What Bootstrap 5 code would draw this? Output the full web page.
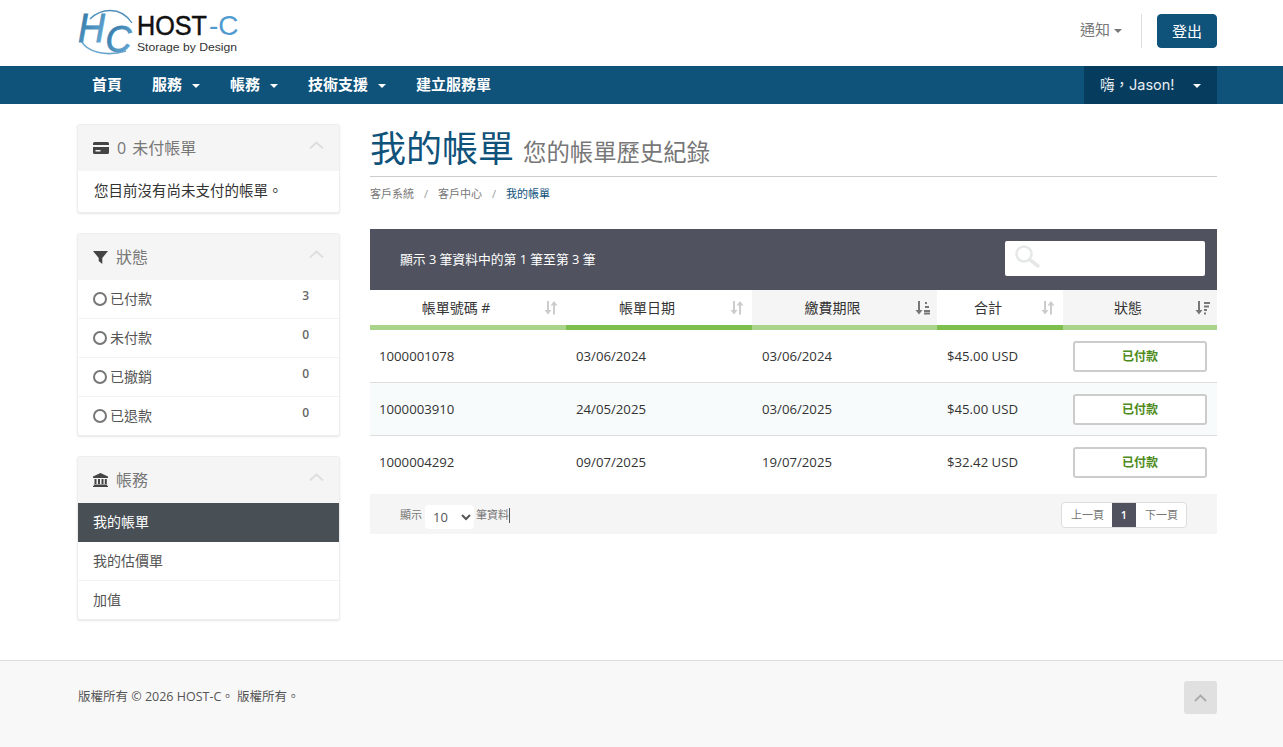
<!DOCTYPE html>
<html lang="zh-Hant">
<head>
  <meta charset="UTF-8">
  <meta name="viewport" content="width=device-width, initial-scale=1.0">
  <title>我的帳單 - HOST-C</title>
  <link href="https://cdn.jsdelivr.net/npm/bootstrap@5.3.0/dist/css/bootstrap.min.css" rel="stylesheet">
  <style>
    body { font-family: "Open Sans", "Noto Sans CJK TC", sans-serif; font-size: 14px; color: #333; background: #fff; overflow: hidden; }
    .wrap { width: 1139px; margin-left: 78px; }

    .top-head { height: 66px; }
    .logo-svg { display: block; width: 164px; height: 56px; }
    .head-right { margin-bottom: 4px; }
    .notify { color: #777; font-size: 15px; margin-bottom: 3px; }
    .caret-down { display: inline-block; width: 0; height: 0; border-left: 4px solid transparent; border-right: 4px solid transparent; border-top: 4px solid currentColor; vertical-align: middle; }
    .head-split { width: 1px; height: 34px; background: #ddd; margin: 0 15px 0 19px; }
    .logout-btn { background: #0f527a; color: #fff; border: 1px solid #0f527a; border-radius: 4px; font-size: 15px; padding: 0; width: 60px; height: 34px; }

    .main-nav { background: #0f527a; height: 38px; }
    .main-nav .wrap { height: 38px; }
    .main-link { color: #fff; font-weight: 700; font-size: 15px; padding: 0 15px; line-height: 36px; text-decoration: none; white-space: nowrap; }
    .main-link:first-child { margin-left: -1px; }
    .main-link .caret-down { margin-left: 10px; }
    .user-link { background: #063d5f; color: #e6eef3; font-family: Inter, "Noto Sans CJK TC", sans-serif; font-size: 14.5px; height: 38px; line-height: 38px; width: 133px; padding-left: 16px; text-decoration: none; white-space: nowrap; }
    .user-link .caret-down { margin-left: 18px; color: #fff; }

    .page-body { padding-top: 20px; height: 556px; gap: 30px; }
    .side-col { width: 263px; flex: none; margin-left: -1px; }
    .main-col { width: 847px; flex: none; }

    .side-panel { border: 1px solid #eee; border-radius: 3px; margin-bottom: 20px; box-shadow: 0 1px 2px rgba(0,0,0,.1); background: #fff; }
    .side-head { background: #f5f5f5; height: 46px; padding: 0 15px; color: #777; font-size: 16px; gap: 8px; word-spacing: 2px; }
    .side-head svg.ico { color: #444; flex: none; }
    .side-head .chev { margin-left: auto; margin-top: -6px; }
    .side-text { padding: 9px 16px 0; height: 41px; color: #333; font-size: 14.5px; }
    .side-item { height: 39px; padding: 0 15px 2px; border-bottom: 1px solid #f3f3f3; color: #555; font-size: 14px; text-decoration: none; }
    .side-item:last-child { height: 38px; border-bottom: 0; }
    .side-item.is-current { background: #484f55; color: #fff; border-bottom: 0; }
    .side-count { margin-left: auto; margin-right: 15px; margin-top: -4px; font-size: 12px; font-weight: 600; color: #666; }
    .ring { width: 14px; height: 14px; border: 2px solid #777; border-radius: 50%; margin-right: 3px; margin-top: 2px; flex: none; }

    .title-row { height: 53px; border-bottom: 1px solid #ccc; gap: 9px; }
    .page-title { color: #0f527a; font-size: 36px; font-weight: 400; line-height: 50px; margin: 0; }
    .page-sub { color: #777; font-size: 23.4px; line-height: 34px; margin-top: 11px; }
    .crumbs { margin: 9px 0 0; height: 43px; font-size: 11px; color: #777; padding: 0; list-style: none; }
    .crumbs li + li::before { content: "/"; padding: 0 10px; color: #999; }
    .crumbs .now { color: #0f527a; }

    .tbl-bar { background: #50535f; height: 61px; padding: 0 12px 0 30px; color: #fff; font-size: 12.8px; }
    .tbl-search { margin-left: auto; margin-bottom: 2px; width: 200px; height: 35px; background: #fff; border-radius: 2px; padding: 4px 10px; }

    .inv-table { table-layout: fixed; width: 847px; margin: 0; border-collapse: separate; border-spacing: 0; }
    .inv-table th { height: 40px; padding: 0 34px 0 10px; border: 0; border-bottom: 5px solid #a9d48a; text-align: center; vertical-align: middle; font-weight: 400; font-size: 14px; color: #333; position: relative; background: #fff; }
    .inv-table th.sort-on { background: #f5f5f5; }
    .inv-table th.sort-hard { border-bottom-color: #7cbf4d; }
    .inv-table th svg { position: absolute; right: 8px; top: 10px; }
    .inv-table th.sort-on svg { right: 6px; }
    .inv-table td { height: 53px; padding: 0 10px; border: 0; border-bottom: 1px solid #ddd; font-size: 13.2px; color: #333; vertical-align: middle; background: transparent; }
    .inv-table td:not(:last-child) { padding-top: 2px; }
    .inv-table td:first-child { padding-left: 9px; }
    .inv-table tr.alt-row td { background: #f7fbfc; }
    .inv-table tr:last-child td { border-bottom: 0; padding-top: 0; }
    .paid-tag { display: block; height: 31px; line-height: 27px; margin: 0; border: 2px solid #ccc; border-radius: 3px; background: #fff; color: #4d8b1c; font-weight: 700; font-size: 12px; text-align: center; }

    .tbl-foot { background: #f5f5f5; height: 40px; margin-top: 5px; padding: 2px 30px 0; font-size: 11px; color: #777; }
    .len-select { width: 49px; height: 24px; margin: 4px 2px 0 3px; border: 0; border-radius: 4px; background: #fff; font-size: 13px; color: #555; padding: 0 0 0 4px; font-family: inherit; }
    .caret-bar { width: 1px; height: 15px; background: #555; }
    .pager { margin-left: auto; height: 26px; border: 1px solid #ddd; border-radius: 4px; background: #fff; overflow: hidden; font-size: 11px; }
    .pager span { padding: 0 8px 0 9px; line-height: 24px; color: #777; }
    .pager .is-on { background: #50535f; color: #fff; font-weight: 600; padding: 0; width: 24px; text-align: center; }

    .site-foot { background: #f8f8f8; border-top: 1px solid #ddd; height: 87px; color: #555; font-size: 12.5px; }
    .site-foot .wrap { padding-top: 20px; }
    .foot-copy { margin-top: 7px; }
    .to-top { margin-left: auto; width: 33px; height: 33px; background: #e0e0e0; border-radius: 3px; }
  </style>
</head>
<body>

  <header class="top-head">
    <div class="wrap h-100 d-flex align-items-center">
      <svg class="logo-svg" viewBox="0 0 164 56" aria-label="HOST-C">
        <defs>
          <linearGradient id="hcBlue" x1="0" y1="0" x2="1" y2="1">
            <stop offset="0" stop-color="#2a6f9f"/>
            <stop offset="1" stop-color="#6db1dc"/>
          </linearGradient>
        </defs>
        <path d="M12 14 C22 4 42 0 54 18" fill="none" stroke="#4f8fba" stroke-width="1.300"/>
        <path d="M3 35 C8 47 28 52 48 46" fill="none" stroke="#6aa5cc" stroke-width="1.600"/>
        <text x="0" y="37" font-family="Liberation Sans" font-style="italic" font-size="40" textLength="27" lengthAdjust="spacingAndGlyphs" stroke="url(#hcBlue)" stroke-width=".8" fill="url(#hcBlue)">H</text>
        <text x="27.500" y="47" font-family="Liberation Sans" font-style="italic" font-size="36" textLength="26" lengthAdjust="spacingAndGlyphs" stroke="url(#hcBlue)" stroke-width=".8" fill="url(#hcBlue)">C</text>
        <text transform="translate(59 30) scale(.9 1)" font-family="Liberation Sans" font-size="28" stroke="#111" stroke-width=".5" fill="#111">HOST</text>
        <text x="131" y="30" font-family="Liberation Sans" font-size="28" fill="#4f9bd0">-C</text>
        <text x="59" y="46" font-family="Liberation Sans" font-size="11" textLength="100" lengthAdjust="spacingAndGlyphs" fill="#333">Storage by Design</text>
      </svg>
      <div class="head-right ms-auto d-flex align-items-center">
        <span class="notify">通知 <span class="caret-down"></span></span>
        <span class="head-split"></span>
        <button class="logout-btn" type="button">登出</button>
      </div>
    </div>
  </header>

  <nav class="main-nav">
    <div class="wrap d-flex">
      <a class="main-link" href="#">首頁</a>
      <a class="main-link" href="#">服務<span class="caret-down"></span></a>
      <a class="main-link" href="#">帳務<span class="caret-down"></span></a>
      <a class="main-link" href="#">技術支援<span class="caret-down"></span></a>
      <a class="main-link" href="#">建立服務單</a>
      <a class="user-link ms-auto" href="#">嗨，Jason!<span class="caret-down"></span></a>
    </div>
  </nav>

  <div class="wrap page-body d-flex">
    <aside class="side-col">
      <div class="side-panel">
        <div class="side-head d-flex align-items-center">
          <svg class="ico" width="16" height="12" viewBox="0 0 16 12"><path fill="currentColor" d="M1.500 0h13A1.500 1.500 0 0 1 16 1.500V3H0V1.500A1.500 1.500 0 0 1 1.500 0zM0 5h16v5.500a1.500 1.500 0 0 1-1.500 1.500h-13A1.500 1.500 0 0 1 0 10.500zm2.500 3v1.500h5V8z"/></svg>
          <span>0 未付帳單</span>
          <svg class="chev" width="15" height="8" viewBox="0 0 15 8"><path d="M1 7.500l6.500-6L14 7.500" fill="none" stroke="#ddd" stroke-width="1.800"/></svg>
        </div>
        <div class="side-text">您目前沒有尚未支付的帳單。</div>
      </div>

      <div class="side-panel">
        <div class="side-head d-flex align-items-center">
          <svg class="ico" width="15" height="13" viewBox="0 0 15 13"><path fill="currentColor" d="M0 0h15L9.300 7v6L5.700 10V7z"/></svg>
          <span>狀態</span>
          <svg class="chev" width="15" height="8" viewBox="0 0 15 8"><path d="M1 7.500l6.500-6L14 7.500" fill="none" stroke="#ddd" stroke-width="1.800"/></svg>
        </div>
        <a class="side-item d-flex align-items-center" href="#"><span class="ring"></span>已付款<span class="side-count">3</span></a>
        <a class="side-item d-flex align-items-center" href="#"><span class="ring"></span>未付款<span class="side-count">0</span></a>
        <a class="side-item d-flex align-items-center" href="#"><span class="ring"></span>已撤銷<span class="side-count">0</span></a>
        <a class="side-item d-flex align-items-center" href="#"><span class="ring"></span>已退款<span class="side-count">0</span></a>
      </div>

      <div class="side-panel">
        <div class="side-head d-flex align-items-center">
          <svg class="ico" width="15" height="14" viewBox="0 0 15 14"><path fill="currentColor" d="M7.500 0L15 3.500V5H0V3.500zM1.500 6h2v5h-2zM5 6h2v5H5zM8.500 6h2v5h-2zM11.800 6h2v5h-2zM.8 11.500h13.400V13H.8zM0 13h15v1H0z"/></svg>
          <span>帳務</span>
          <svg class="chev" width="15" height="8" viewBox="0 0 15 8"><path d="M1 7.500l6.500-6L14 7.500" fill="none" stroke="#ddd" stroke-width="1.800"/></svg>
        </div>
        <a class="side-item is-current d-flex align-items-center" href="#">我的帳單</a>
        <a class="side-item d-flex align-items-center" href="#">我的估價單</a>
        <a class="side-item d-flex align-items-center" href="#">加值</a>
      </div>
    </aside>

    <main class="main-col">
      <div class="title-row d-flex">
        <h1 class="page-title">我的帳單</h1>
        <span class="page-sub">您的帳單歷史紀錄</span>
      </div>
      <ol class="crumbs d-flex">
        <li>客戶系統</li>
        <li>客戶中心</li>
        <li class="now">我的帳單</li>
      </ol>

      <div class="tbl-bar d-flex align-items-center">
        <span>顯示 3 筆資料中的第 1 筆至第 3 筆</span>
        <div class="tbl-search">
          <svg width="26" height="24" viewBox="0 0 26 24"><circle cx="9" cy="9" r="7.500" fill="none" stroke="#e6e8e8" stroke-width="2.500"/><path d="M14.500 14.500L23 21" stroke="#e6e8e8" stroke-width="3.500" stroke-linecap="round"/></svg>
        </div>
      </div>

      <table class="table inv-table">
        <colgroup><col style="width:196px"><col style="width:186px"><col style="width:185px"><col style="width:126px"><col style="width:154px"></colgroup>
        <thead>
          <tr>
            <th>帳單號碼 #<svg width="14" height="16" viewBox="0 0 14 16"><path fill="#ccc" d="M3 1h2v9h2.500L4 14.500.5 10H3zM9 14.500h2v-9h2.500L10 1 6.500 5.500H9z"/></svg></th>
            <th class="sort-hard">帳單日期<svg width="14" height="16" viewBox="0 0 14 16"><path fill="#ccc" d="M3 1h2v9h2.500L4 14.500.5 10H3zM9 14.500h2v-9h2.500L10 1 6.500 5.500H9z"/></svg></th>
            <th class="sort-on">繳費期限<svg width="16" height="16" viewBox="0 0 16 16"><path fill="#777" d="M3 1h2v9h2.500L4 14.500.5 10H3zM10 2h2v2h-2zM10 6h4v2h-4zM9 10h6v2H9zM9 12.500h6v2H9z"/></svg></th>
            <th class="sort-hard">合計<svg width="14" height="16" viewBox="0 0 14 16"><path fill="#ccc" d="M3 1h2v9h2.500L4 14.500.5 10H3zM9 14.500h2v-9h2.500L10 1 6.500 5.500H9z"/></svg></th>
            <th class="sort-on">狀態<svg width="16" height="16" viewBox="0 0 16 16"><path fill="#777" d="M3 1h2v9h2.500L4 14.500.5 10H3zM9 2h6v2H9zM9 5.500h5v2H9zM9 9h3v2H9zM9 12.500h2v2H9z"/></svg></th>
          </tr>
        </thead>
        <tbody>
          <tr><td>1000001078</td><td>03/06/2024</td><td>03/06/2024</td><td>$45.00 USD</td><td><span class="paid-tag">已付款</span></td></tr>
          <tr class="alt-row"><td>1000003910</td><td>24/05/2025</td><td>03/06/2025</td><td>$45.00 USD</td><td><span class="paid-tag">已付款</span></td></tr>
          <tr><td>1000004292</td><td>09/07/2025</td><td>19/07/2025</td><td>$32.42 USD</td><td><span class="paid-tag">已付款</span></td></tr>
        </tbody>
      </table>

      <div class="tbl-foot d-flex align-items-center">
        <span>顯示</span>
        <select class="len-select"><option>10</option><option>25</option></select>
        <span>筆資料</span><span class="caret-bar"></span>
        <div class="pager d-flex">
          <span>上一頁</span><span class="is-on">1</span><span>下一頁</span>
        </div>
      </div>
    </main>
  </div>

  <footer class="site-foot">
    <div class="wrap d-flex align-items-start">
      <span class="foot-copy">版權所有 © 2026 HOST-C。 版權所有。</span>
      <span class="to-top d-flex align-items-center justify-content-center">
        <svg width="13" height="8" viewBox="0 0 13 8"><path d="M1 7l5.500-5.500L12 7" fill="none" stroke="#aaa" stroke-width="1.800"/></svg>
      </span>
    </div>
  </footer>

</body>
</html>
